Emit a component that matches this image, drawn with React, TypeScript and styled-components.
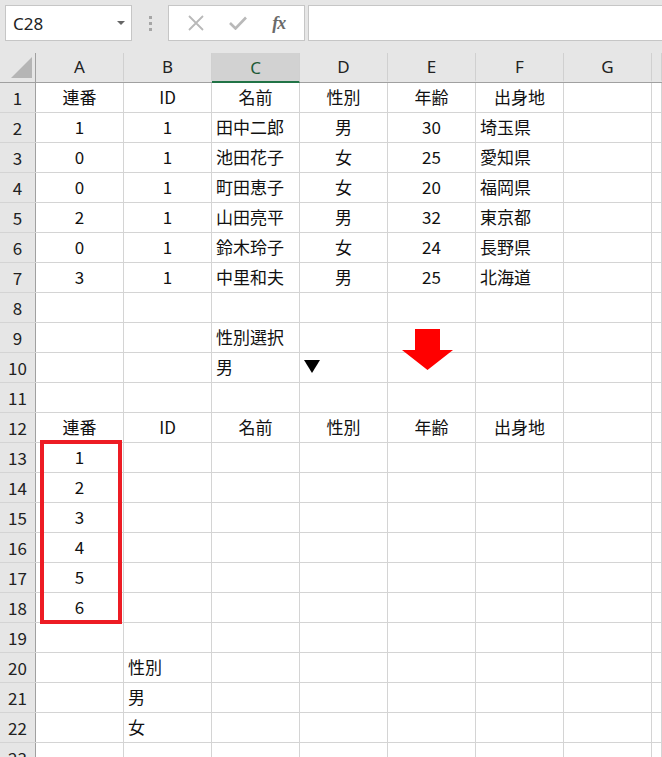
import styled, { createGlobalStyle } from "styled-components";

const GlobalStyle = createGlobalStyle`
  html, body {
    margin: 0;
    padding: 0;
    background: #e6e6e6;
    overflow: hidden;
  }
`;

const FONT = `"Noto Sans CJK JP", "Noto Sans", sans-serif`;

const Page = styled.div`
  width: 662px;
  height: 757px;
  overflow: hidden;
  background: #e6e6e6;
  font-family: ${FONT};
`;

const Toolbar = styled.div`
  display: flex;
  align-items: center;
  height: 36px;
  padding: 5px 0 12px 5px;
`;

const NameBox = styled.div`
  box-sizing: border-box;
  width: 127px;
  height: 36px;
  background: #fff;
  border: 1px solid #c6c6c6;
  display: flex;
  align-items: center;
  justify-content: space-between;
  padding: 0 6px 0 7px;
  font-family: "Noto Sans", sans-serif;
  font-size: 17px;
  color: #222;
`;

const Caret = styled.span`
  width: 0;
  height: 0;
  border-left: 4px solid transparent;
  border-right: 4px solid transparent;
  border-top: 4px solid #666;
`;

const Grip = styled.div`
  display: flex;
  flex-direction: column;
  gap: 3px;
  margin: 0 16px 0 17px;
  span {
    width: 3px;
    height: 3px;
    background: #a6a6a6;
  }
`;

const FxBox = styled.div`
  box-sizing: border-box;
  width: 137px;
  height: 36px;
  background: #fff;
  border: 1px solid #c6c6c6;
  display: flex;
  align-items: center;
  justify-content: space-around;
  padding: 0 6px;
`;

const FxLabel = styled.span`
  font-family: "Liberation Serif", serif;
  font-style: italic;
  font-weight: bold;
  font-size: 18px;
  color: #6a6a6a;
  letter-spacing: -1px;
`;

const FormulaInput = styled.div`
  flex: 1;
  box-sizing: border-box;
  height: 36px;
  margin-left: 3px;
  background: #fff;
  border: 1px solid #c6c6c6;
  border-right: none;
`;

const Sheet = styled.div`
  position: relative;
  background: #fff;
`;

const Row = styled.div<{ $head?: boolean }>`
  box-sizing: border-box;
  display: flex;
  height: 30px;
  background: ${(p) => (p.$head ? "#e6e6e6" : "#fff")};
  border-bottom: 1px solid ${(p) => (p.$head ? "#a0a0a0" : "#d4d4d4")};
`;

const Corner = styled.div`
  box-sizing: border-box;
  width: 36px;
  flex: none;
  border-right: 1px solid #a0a0a0;
  display: flex;
  align-items: flex-end;
  justify-content: flex-end;
  padding: 0 3px 4px 0;
`;

const RowHead = styled.div`
  box-sizing: border-box;
  width: 36px;
  flex: none;
  background: #e6e6e6;
  border-right: 1px solid #a0a0a0;
  display: flex;
  align-items: center;
  justify-content: center;
  font-size: 17px;
  color: #222;
`;

const ColHead = styled.div<{ $selected?: boolean; $fill?: boolean }>`
  box-sizing: border-box;
  width: ${(p) => (p.$fill ? "auto" : "88px")};
  flex: ${(p) => (p.$fill ? "1" : "none")};
  border-right: 1px solid #d0d0d0;
  background: ${(p) => (p.$selected ? "#d2d2d2" : "transparent")};
  border-bottom: 2px solid ${(p) => (p.$selected ? "#217346" : "transparent")};
  margin-bottom: ${(p) => (p.$selected ? "-1px" : "0")};
  display: flex;
  align-items: center;
  justify-content: center;
  font-family: "Noto Sans", sans-serif;
  font-size: 17px;
  color: ${(p) => (p.$selected ? "#1d5a36" : "#222")};
`;

const Cell = styled.div<{ $align: "left" | "center"; $fill?: boolean }>`
  box-sizing: border-box;
  width: ${(p) => (p.$fill ? "auto" : "88px")};
  flex: ${(p) => (p.$fill ? "1" : "none")};
  border-right: 1px solid #d4d4d4;
  display: flex;
  align-items: center;
  justify-content: ${(p) => (p.$align === "left" ? "flex-start" : "center")};
  padding: 0 4px 2px;
  font-size: 17px;
  color: #111;
  white-space: nowrap;
`;

const Highlight = styled.div`
  position: absolute;
  left: 40px;
  top: 387px;
  width: 82px;
  height: 184px;
  box-sizing: border-box;
  border: 4px solid #ed1c24;
  pointer-events: none;
`;

const DownArrow = styled.svg`
  position: absolute;
  left: 402px;
  top: 276px;
`;

const COLS = ["A", "B", "C", "D", "E", "F", "G"];
const HEADERS = ["連番", "ID", "名前", "性別", "年齢", "出身地"];

const DROPDOWN = "__dropdown__";

const data: Record<number, string[]> = {
  1: HEADERS,
  2: ["1", "1", "田中二郎", "男", "30", "埼玉県"],
  3: ["0", "1", "池田花子", "女", "25", "愛知県"],
  4: ["0", "1", "町田恵子", "女", "20", "福岡県"],
  5: ["2", "1", "山田亮平", "男", "32", "東京都"],
  6: ["0", "1", "鈴木玲子", "女", "24", "長野県"],
  7: ["3", "1", "中里和夫", "男", "25", "北海道"],
  9: ["", "", "性別選択"],
  10: ["", "", "男", DROPDOWN],
  12: HEADERS,
  13: ["1"],
  14: ["2"],
  15: ["3"],
  16: ["4"],
  17: ["5"],
  18: ["6"],
  20: ["", "性別"],
  21: ["", "男"],
  22: ["", "女"],
};

// names and places sit on the left from row 2 down; the rest is centred
const alignFor = (row: number, col: number): "left" | "center" => {
  if (row >= 2 && row <= 10 && (col === 2 || col === 5)) return "left";
  if (row >= 20 && col === 1) return "left";
  return "center";
};

function Dropdown() {
  return (
    <svg width="16" height="13" viewBox="0 0 16 13">
      <polygon points="0,0 16,0 8,13" fill="#000" />
    </svg>
  );
}

function CloseIcon() {
  return (
    <svg width="16" height="16" viewBox="0 0 16 16">
      <path d="M1 1 L15 15 M15 1 L1 15" stroke="#b9b9b9" strokeWidth="1.8" fill="none" />
    </svg>
  );
}

function CheckIcon() {
  return (
    <svg width="18" height="14" viewBox="0 0 18 14">
      <path d="M1 7 L6.5 12.5 L17 1.5" stroke="#b9b9b9" strokeWidth="2.6" fill="none" />
    </svg>
  );
}

export default function App() {
  const rows = Array.from({ length: 23 }, (_, i) => i + 1);
  return (
    <Page>
      <GlobalStyle />
      <Toolbar>
        <NameBox>
          C28
          <Caret />
        </NameBox>
        <Grip>
          <span />
          <span />
          <span />
        </Grip>
        <FxBox>
          <CloseIcon />
          <CheckIcon />
          <FxLabel>fx</FxLabel>
        </FxBox>
        <FormulaInput />
      </Toolbar>
      <Sheet>
        <Row $head>
          <Corner>
            <svg width="21" height="21" viewBox="0 0 21 21">
              <polygon points="21,0 21,21 0,21" fill="#b5b5b5" />
            </svg>
          </Corner>
          {COLS.map((c) => (
            <ColHead key={c} $selected={c === "C"}>
              {c}
            </ColHead>
          ))}
          <ColHead $fill />
        </Row>
        {rows.map((r) => {
          const values = data[r] ?? [];
          return (
            <Row key={r}>
              <RowHead>{r}</RowHead>
              {COLS.map((c, ci) => {
                const v = values[ci] ?? "";
                return (
                  <Cell key={c} $align={v === DROPDOWN ? "left" : alignFor(r, ci)}>
                    {v === DROPDOWN ? <Dropdown /> : v}
                  </Cell>
                );
              })}
              <Cell $align="center" $fill />
            </Row>
          );
        })}
        <Highlight />
        <DownArrow width="51" height="41" viewBox="0 0 51 41">
          <polygon points="13,0 38,0 38,21 51,21 25.5,41 0,21 13,21" fill="#ff0000" />
        </DownArrow>
      </Sheet>
    </Page>
  );
}
